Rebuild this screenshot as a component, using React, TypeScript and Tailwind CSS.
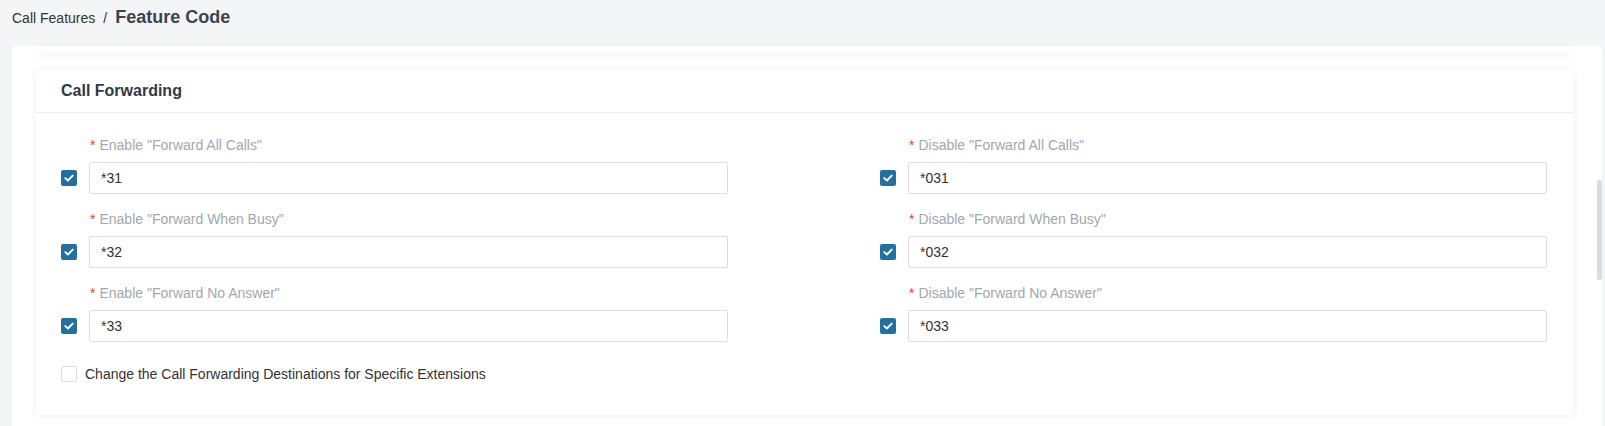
import React from "react";

const fields: [string, string, string, string][] = [
  ['Enable "Forward All Calls"', "*31", 'Disable "Forward All Calls"', "*031"],
  ['Enable "Forward When Busy"', "*32", 'Disable "Forward When Busy"', "*032"],
  ['Enable "Forward No Answer"', "*33", 'Disable "Forward No Answer"', "*033"],
];

function Checked() {
  return (
    <div className="w-[16px] h-[16px] rounded-[2px] bg-[#236f9e] flex items-center justify-center shrink-0">
      <svg width="10" height="8" viewBox="0 0 10 8" fill="none">
        <path d="M1.3 4.1 L3.9 6.5 L8.7 1.6" stroke="white" strokeWidth="1.9" strokeLinecap="round" strokeLinejoin="round" />
      </svg>
    </div>
  );
}

function Field({ label, value }: { label: string; value: string }) {
  return (
    <div>
      <div className="h-[20px] leading-[20px] pl-[29px] text-[14px] text-[#a3a7ae] mb-[7px]">
        <span className="text-[#f0412f] mr-[4px]">*</span>
        {label}
      </div>
      <div className="flex items-center gap-[12px]">
        <Checked />
        <div className="flex-1 h-[32px] border border-[#dcdee3] rounded-[2px] flex items-center px-[11px] text-[14px] text-[#333]">
          {value}
        </div>
      </div>
    </div>
  );
}

export default function App() {
  return (
    <div
      className="w-[1605px] h-[426px] bg-[#f4f5f7] overflow-hidden flex flex-col"
      style={{ fontFamily: '"Liberation Sans", Arial, sans-serif' }}
    >
      <div className="h-[46px] shrink-0 flex items-start pt-[8px] pl-[12px]">
        <span className="text-[14px] text-[#333] leading-[20px]">Call Features</span>
        <span className="text-[14px] text-[#333] leading-[20px] mx-[8px]">/</span>
        <span className="text-[18px] font-bold text-[#3b4350] leading-[18px] mt-[0px]">Feature Code</span>
      </div>
      <div className="relative flex-1 ml-[12px] mr-[3px] bg-white rounded-t-[4px] pl-[24px] pr-[29px]">
        <div className="h-[7px] bg-white rounded-b-[4px] shadow-[0_2px_8px_rgba(0,0,0,0.06)]" />
        <div className="mt-[17px] bg-white rounded-[4px] shadow-[0_1px_8px_rgba(0,0,0,0.07)]">
          <div className="h-[43px] border-b border-[#ececef] pl-[25px] flex items-center">
            <span className="text-[16px] font-bold text-[#323844]">Call Forwarding</span>
          </div>
          <div className="pl-[25px] pr-[26px] pt-[22px] pb-[33px]">
            <div className="grid grid-cols-2 gap-x-[152px] gap-y-[15px]">
              {fields.map(([l1, v1, l2, v2]) => (
                <React.Fragment key={v1}>
                  <Field label={l1} value={v1} />
                  <Field label={l2} value={v2} />
                </React.Fragment>
              ))}
            </div>
            <div className="flex items-center gap-[8px] mt-[24px]">
              <div className="w-[16px] h-[16px] border border-[#dcdee3] rounded-[2px] bg-white" />
              <span className="text-[14px] text-[#333] leading-[16px]">
                Change the Call Forwarding Destinations for Specific Extensions
              </span>
            </div>
          </div>
        </div>
        <div className="absolute right-[0px] top-[134px] w-[5px] h-[100px] rounded-[3px] bg-[#dcdcdf]" />
      </div>
    </div>
  );
}
